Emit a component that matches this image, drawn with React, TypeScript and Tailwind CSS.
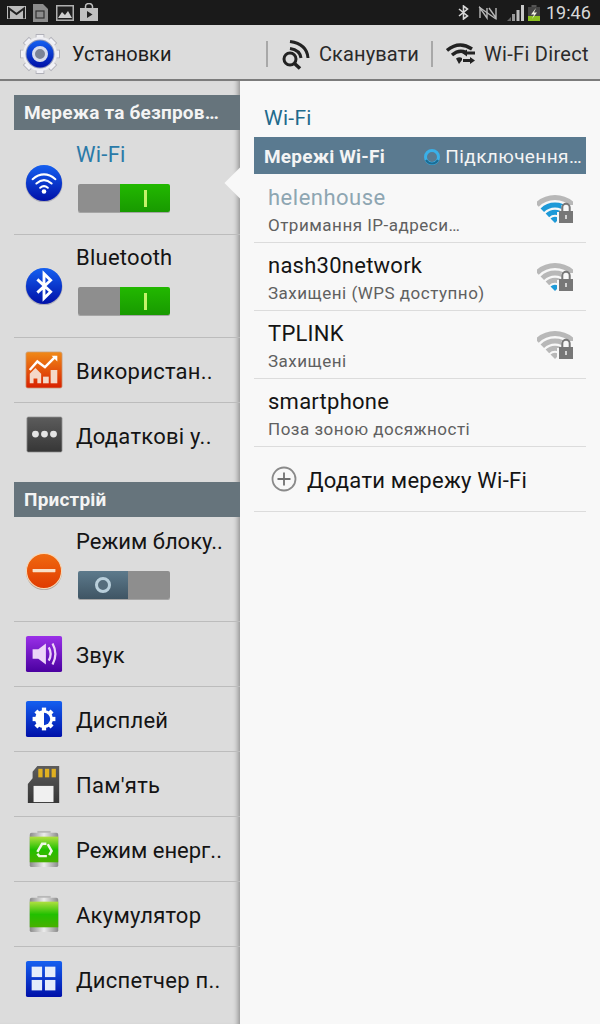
import React from "react";

const Toggle = ({ on }: { on: boolean }) =>
  on ? (
    <div className="flex h-[28px] w-[92px] overflow-hidden rounded-[2px] shadow-[0_1px_0_rgba(0,0,0,0.25)]">
      <div className="w-[42px] bg-[#8e8e8e]" />
      <div className="flex w-[50px] items-center justify-center bg-linear-to-b from-[#22b800] to-[#189a00]">
        <div className="h-[17px] w-[3px] bg-[#c4f26a]" />
      </div>
    </div>
  ) : (
    <div className="flex h-[28px] w-[92px] overflow-hidden rounded-[2px] shadow-[0_1px_0_rgba(0,0,0,0.25)]">
      <div className="flex w-[50px] items-center justify-center bg-linear-to-b from-[#5d7a8c] to-[#3f5564]">
        <div className="h-[16px] w-[16px] rounded-full border-[3px] border-[#b9cfdb] bg-[#566d7c]" />
      </div>
      <div className="w-[42px] bg-[#8e8e8e]" />
    </div>
  );

const Defs = () => (
  <svg width="0" height="0" className="absolute">
    <defs>
      <linearGradient id="blue" x1="0" y1="0" x2="0" y2="1">
        <stop offset="0" stopColor="#1560f0" />
        <stop offset="1" stopColor="#0010a8" />
      </linearGradient>
      <linearGradient id="orange" x1="0" y1="0" x2="0" y2="1">
        <stop offset="0" stopColor="#f08a18" />
        <stop offset="1" stopColor="#d82000" />
      </linearGradient>
      <linearGradient id="red" x1="0" y1="0" x2="0" y2="1">
        <stop offset="0" stopColor="#f06a10" />
        <stop offset="1" stopColor="#e03a00" />
      </linearGradient>
      <linearGradient id="purple" x1="0" y1="0" x2="0" y2="1">
        <stop offset="0" stopColor="#9a30e8" />
        <stop offset="1" stopColor="#4a00a0" />
      </linearGradient>
      <linearGradient id="dark" x1="0" y1="0" x2="0" y2="1">
        <stop offset="0" stopColor="#5c5c5c" />
        <stop offset="1" stopColor="#363636" />
      </linearGradient>
      <linearGradient id="green" x1="0" y1="0" x2="0" y2="1">
        <stop offset="0" stopColor="#b0e040" />
        <stop offset="0.5" stopColor="#22c000" />
        <stop offset="1" stopColor="#48b000" />
      </linearGradient>
      <linearGradient id="metal" x1="0" y1="0" x2="1" y2="0">
        <stop offset="0" stopColor="#8a8a8a" />
        <stop offset="0.5" stopColor="#ececec" />
        <stop offset="1" stopColor="#8a8a8a" />
      </linearGradient>
    </defs>
  </svg>
);

const I = ({ children }: { children: React.ReactNode }) => (
  <svg width="38" height="38" viewBox="0 0 40 40" className="block">
    {children}
  </svg>
);

const WifiRound = () => (
  <I>
    <circle cx="20" cy="21" r="19.5" fill="#7a7a90" opacity=".45" />
    <circle cx="20" cy="20" r="19" fill="url(#blue)" />
    <g fill="none" stroke="#fff" strokeWidth="2.2" strokeLinecap="round">
      <path d="M8 16 Q20 6 32 16" />
      <path d="M12 20.5 Q20 13.5 28 20.5" />
      <path d="M16 25 Q20 21.5 24 25" />
    </g>
    <circle cx="20" cy="29" r="2.4" fill="#fff" />
  </I>
);
const BtRound = () => (
  <I>
    <circle cx="20" cy="21" r="19.5" fill="#7a7a90" opacity=".45" />
    <circle cx="20" cy="20" r="19" fill="url(#blue)" />
    <path d="M13 13 L27 26 L20 33 L20 7 L27 14 L13 27" fill="none" stroke="#fff" strokeWidth="3" strokeLinejoin="miter" />
  </I>
);
const Usage = () => (
  <I>
    <rect x="1" y="1" width="38" height="38" rx="2" fill="url(#orange)" stroke="#c9a080" strokeWidth=".8" />
    <path d="M5 20 L13 11 L21 17 L32 6" fill="none" stroke="#fff" strokeWidth="2.6" />
    <path d="M28 5 H34 V11 Z" fill="#fff" />
    <path d="M5 34 V24 L11 18 L17 24 V34 H13 V29 H9 V34 Z" fill="#f4d8c8" />
    <rect x="19" y="27" width="6" height="7" fill="#f4d8c8" />
    <rect x="27" y="20" width="7" height="14" fill="#f4d8c8" />
  </I>
);
const More = () => (
  <I>
    <rect x="2" y="1" width="37" height="37" rx="1.5" fill="url(#dark)" stroke="#9a9a9a" strokeWidth=".8" />
    <circle cx="11" cy="19" r="3.6" fill="#e4e4e4" />
    <circle cx="20.5" cy="19" r="3.6" fill="#e4e4e4" />
    <circle cx="30" cy="19" r="3.6" fill="#e4e4e4" />
  </I>
);
const Block = () => (
  <I>
    <circle cx="20" cy="21" r="19" fill="#7a6a60" opacity=".5" />
    <circle cx="20" cy="20" r="18.5" fill="url(#red)" stroke="#f6d8b8" strokeWidth="1.2" />
    <rect x="8" y="18" width="24" height="3.4" rx=".5" fill="#f8e0c8" />
  </I>
);
const Sound = () => (
  <I>
    <rect x="1" y="1" width="38" height="38" rx="2" fill="url(#purple)" />
    <path d="M8 15 H14 L22 9 V31 L14 25 H8 Z" fill="#ecd4f8" />
    <path d="M25 13 Q29 20 25 27" fill="none" stroke="#ecd4f8" strokeWidth="2.4" />
    <path d="M29 9 Q35 20 29 31" fill="none" stroke="#ecd4f8" strokeWidth="2.4" />
  </I>
);
const Display = () => (
  <I>
    <rect x="1" y="1" width="38" height="38" rx="2" fill="url(#blue)" />
    <g stroke="#fff" strokeWidth="4.5">
      <path d="M20 8 V32" />
      <path d="M8 20 H32" />
      <path d="M11.5 11.5 L28.5 28.5" />
      <path d="M28.5 11.5 L11.5 28.5" />
    </g>
    <circle cx="20" cy="20" r="9.5" fill="#fff" />
    <path d="M20 13.5 A6.5 6.5 0 0 1 20 26.5 Z" fill="#0a3ad0" />
  </I>
);
const Memory = () => (
  <I>
    <path d="M13 1 H36 V40 H3 V20 L8 14 V7 Z" fill="url(#dark)" />
    <g fill="#e0b020">
      <rect x="14" y="4" width="4.5" height="9" />
      <rect x="21" y="4" width="4.5" height="9" />
      <rect x="28" y="4" width="4.5" height="9" />
    </g>
    <rect x="9" y="22" width="21" height="17" fill="#f0f0f0" />
  </I>
);
const Batt = ({ recycle }: { recycle?: boolean }) => (
  <I>
    <rect x="13" y="1" width="14" height="4" fill="#b8b8b8" />
    <rect x="5" y="3" width="30" height="36" rx="2" fill="url(#metal)" />
    <rect x="5" y="7" width="30" height="27" fill="url(#green)" />
    {recycle && (
      <g fill="none" stroke="#f0f8e8" strokeWidth="2.6">
        <path d="M13 23 L18 14.5 H22.5" />
        <path d="M24 15 L28 22 L25.5 26.5" />
        <path d="M23 27.5 H15 L13 25" />
      </g>
    )}
  </I>
);
const Manager = () => (
  <I>
    <rect x="1" y="1" width="38" height="38" rx="2" fill="url(#blue)" />
    <g fill="#e4ecfa">
      <rect x="7" y="7" width="11" height="11" />
      <rect x="21" y="7" width="11" height="11" />
      <rect x="7" y="21" width="11" height="11" />
      <rect x="21" y="21" width="11" height="11" />
    </g>
  </I>
);

const SectionHeader = ({ text }: { text: string }) => (
  <div className="flex h-[35px] items-center bg-[#66747c] pt-[2px] pl-[10px] text-[19px] font-bold tracking-[0.2px] text-[#f4f4f4]">{text}</div>
);

const Sep = () => <div className="h-px bg-[#bcbcbc]" />;

const TallRow = ({
  icon,
  title,
  on,
  active,
  heightClass,
  iconClass,
  textClass,
  trackClass = "tracking-[0.25px]",
}: {
  icon: React.ReactNode;
  title: string;
  on: boolean;
  active?: boolean;
  heightClass: string;
  iconClass: string;
  textClass: string;
  trackClass?: string;
}) => (
  <div className={`flex items-start ${heightClass}`}>
    <div className={`ml-[11px] w-[38px] shrink-0 ${iconClass}`}>{icon}</div>
    <div className={`ml-[13px] flex flex-col ${textClass}`}>
      <div className={`h-[28px] text-[22px] leading-[28px] whitespace-nowrap ${trackClass} ${active ? "text-[#2a7aa8]" : "text-[#141414]"}`}>{title}</div>
      <div className="mt-[15px] ml-[2px]">
        <Toggle on={on} />
      </div>
    </div>
  </div>
);

const Row = ({ icon, title, trackClass = "tracking-[0.25px]" }: { icon: React.ReactNode; title: string; trackClass?: string }) => (
  <div className="flex h-[64px] items-center">
    <div className="ml-[11px] w-[38px] shrink-0">{icon}</div>
    <div className={`ml-[13px] pt-[3px] text-[22px] whitespace-nowrap text-[#141414] ${trackClass}`}>{title}</div>
  </div>
);

const WifiSignal = ({ level }: { level: number }) => {
  const c = (n: number) => (level >= n ? "#1e9ad8" : "#b8b8b8");
  return (
    <svg width="36" height="28" viewBox="0 0 36 28" className="block">
      <g fill="none" strokeWidth="5">
        <path d="M0 10 A25.5 25.5 0 0 1 36 10" stroke={c(4)} />
        <path d="M5.3 15.3 A18 18 0 0 1 30.7 15.3" stroke={c(3)} />
        <path d="M10.4 20.4 A10.8 10.8 0 0 1 25.6 20.4" stroke={c(2)} />
      </g>
      <path d="M18 28 L13.5 23.5 A6.4 6.4 0 0 1 22.5 23.5 Z" fill={c(1)} />
      <path d="M24.5 10 H36 V28 H20 V17 H24.5 Z" fill="#f8f8f8" />
      <rect x="22" y="16" width="14" height="12" fill="#777" />
      <path d="M25.3 16 V12.5 A3.7 3.7 0 0 1 32.7 12.5 V16" fill="none" stroke="#777" strokeWidth="2" />
      <rect x="28.1" y="20" width="1.8" height="4" fill="#ddd" />
    </svg>
  );
};

const Network = ({ name, sub, level, faded }: { name: string; sub: string; level?: number; faded?: boolean }) => (
  <div className="flex h-[68px] items-start justify-between border-b border-[#dcdcdc]">
    <div className="pl-[14px]">
      <div className={`mt-[9px] h-[28px] text-[22px] leading-[28px] ${faded ? "tracking-[0.5px] text-[#8ea6b2]" : "tracking-[0.25px] text-[#141414]"}`}>{name}</div>
      <div className="mt-[2px] text-[17px] leading-[22px] tracking-[0.5px] text-[#606060]">{sub}</div>
    </div>
    {level !== undefined && (
      <div className="mt-[20px] mr-[13px]">
        <WifiSignal level={level} />
      </div>
    )}
  </div>
);

export default function App() {
  return (
    <div className="flex h-[1024px] w-[600px] flex-col overflow-hidden bg-[#f8f8f8] font-['Roboto',sans-serif]">
      <Defs />
      {/* status bar */}
      <div className="flex h-[25px] shrink-0 items-center bg-[#1a1a1a] pl-[7px]">
        <svg width="19" height="13" viewBox="0 0 19 13" className="mr-[7px]">
          <rect width="19" height="13" fill="#bcbcbc" />
          <path d="M2 12.5 V2.5 L9.5 8 L17 2.5 V12.5" fill="none" stroke="#222" strokeWidth="2" />
        </svg>
        <svg width="15" height="18" viewBox="0 0 15 18" className="mr-[8px]">
          <path d="M0 0 H10 L15 5 V18 H0 Z" fill="#8c8c8c" />
          <rect x="3" y="7" width="8" height="7" fill="none" stroke="#333" strokeWidth="1.2" />
        </svg>
        <svg width="18" height="16" viewBox="0 0 18 16" className="mr-[6px]">
          <rect x=".75" y=".75" width="16.5" height="14.5" fill="#222" stroke="#b0b0b0" strokeWidth="1.5" />
          <path d="M2 13 L6 7 L9 10 L12 6 L16 13 Z" fill="#d0d0d0" />
        </svg>
        <svg width="18" height="18" viewBox="0 0 18 18" className="mb-[2px]">
          <rect y="5" width="18" height="13" fill="#c0c0c0" />
          <path d="M5.5 5 V3.5 A3.5 3 0 0 1 12.5 3.5 V5" fill="none" stroke="#c0c0c0" strokeWidth="1.5" />
          <path d="M7 8 L12.5 11.5 L7 15 Z" fill="#222" />
        </svg>
        <div className="flex-1" />
        <svg width="11" height="15" viewBox="0 0 11 15" className="mr-[9px]">
          <path d="M1 4 L9.5 11 L5.5 14 V1 L9.5 4 L1 11" fill="none" stroke="#d8d8d8" strokeWidth="1.6" />
        </svg>
        <svg width="20" height="14" viewBox="0 0 20 14" className="mr-[9px]">
          <g fill="none" stroke="#b8b8b8" strokeWidth="1.4">
            <path d="M2 12 V2 L9 12 V2" />
            <path d="M11 2 L18 12 V2" />
            <path d="M1 1 L18 13" />
          </g>
        </svg>
        <svg width="18" height="16" viewBox="0 0 18 16" className="mr-[3px]">
          <path d="M0 16 L4 12 V16 Z" fill="#666" />
          <rect x="5" y="9" width="3" height="7" fill="#999" />
          <rect x="9.5" y="5" width="3" height="11" fill="#bbb" />
          <rect x="14" y="0" width="3" height="16" fill="#c8c8c8" />
        </svg>
        <svg width="12" height="16" viewBox="0 0 12 16" className="mr-[6px]">
          <rect x="3.5" y="0" width="5" height="2" fill="#555" />
          <rect y="2" width="12" height="14" fill="#444" />
          <rect y="11" width="12" height="5" fill="#8cc020" />
          <path d="M8 3 L3 9.5 H6 L4 14 L9 7.5 H6 Z" fill="#f0f0e0" />
        </svg>
        <div className="w-[54px] text-[18px] text-[#d8d8d8]">19:46</div>
      </div>

      {/* action bar */}
      <div className="flex h-[56px] shrink-0 items-center border-b-2 border-[#7c7c7c] bg-[#dcdcdc] pt-[3px] text-[20px] text-[#2a2a2a]">
        <div className="ml-[20px]">
          <svg width="40" height="40" viewBox="0 0 40 40" className="block">
            <g stroke="#b0b0b8" strokeWidth="8.6">
              <path d="M20 0 V40" />
              <path d="M0 20 H40" />
              <path d="M5.9 5.9 L34.1 34.1" />
              <path d="M34.1 5.9 L5.9 34.1" />
            </g>
            <g stroke="#f2f2f6" strokeWidth="7">
              <path d="M20 1 V39" />
              <path d="M1 20 H39" />
              <path d="M6.5 6.5 L33.5 33.5" />
              <path d="M33.5 6.5 L6.5 33.5" />
            </g>
            <circle cx="20" cy="20" r="17" fill="#eeeef2" />
            <circle cx="20" cy="20" r="14.5" fill="#8e96b8" />
            <circle cx="20" cy="20" r="13.5" fill="url(#blue)" />
            <circle cx="20" cy="20" r="6.5" fill="#7c8496" stroke="#d8dcec" strokeWidth="3" />
          </svg>
        </div>
        <div className="ml-[12px] w-[194px] text-[#1e1e1e]">Установки</div>
        <div className="h-[26px] w-[2px] bg-[#a8a8a8]" />
        <div className="ml-[12px]">
          <svg width="30" height="32" viewBox="0 0 30 32" className="block">
            <g fill="none" stroke="#222" strokeWidth="3">
              <path d="M10 3.5 Q27 6 28 20" />
              <path d="M10 10.5 Q20 12 21 20" />
            </g>
            <circle cx="10" cy="21" r="6" fill="none" stroke="#222" strokeWidth="3" />
            <path d="M14.5 25.5 L20 30.5" stroke="#222" strokeWidth="3.6" />
          </svg>
        </div>
        <div className="ml-[9px] w-[112px] tracking-[0.1px]">Сканувати</div>
        <div className="h-[26px] w-[2px] bg-[#a8a8a8]" />
        <div className="ml-[13px]">
          <svg width="30" height="22" viewBox="0 0 30 22" className="block">
            <g fill="none" stroke="#222" strokeWidth="3.4">
              <path d="M1 7.5 Q13 -2.5 26 6" />
              <path d="M6 12 Q13 6 20 9.5" />
            </g>
            <path d="M10 15.5 Q13.5 13.5 16 15 V17 L13 21 Z" fill="#222" />
            <path d="M16 10 L21 6.5 V8.5 H29 V11.5 H21 V13.5 Z" fill="#222" />
            <path d="M29 17.5 L24 14 V16 H17 V19 H24 V21 Z" fill="#222" />
          </svg>
        </div>
        <div className="ml-[8px] tracking-[0.3px]">Wi-Fi Direct</div>
      </div>

      {/* body */}
      <div className="flex min-h-0 flex-1">
        <div className="relative w-[240px] shrink-0 bg-[#dcdcdc] pt-[14px] pl-[14px] shadow-[inset_-6px_0_5px_-4px_rgba(0,0,0,0.35)]">
          <SectionHeader text="Мережа та безпров…" />
          <TallRow icon={<WifiRound />} title="Wi-Fi" on active heightClass="h-[104px]" iconClass="mt-[34px]" textClass="pt-[11px]" />
          <Sep />
          <TallRow icon={<BtRound />} title="Bluetooth" on heightClass="h-[102px]" iconClass="mt-[32px]" textClass="pt-[9px]" />
          <Sep />
          <Row icon={<Usage />} title="Використан.." />
          <Sep />
          <Row icon={<More />} title="Додаткові у.." />
          <div className="h-[15px]" />
          <SectionHeader text="Пристрій" />
          <TallRow icon={<Block />} title="Режим блоку.." on={false} heightClass="h-[104px]" iconClass="mt-[35px]" textClass="pt-[11px]" trackClass="tracking-[0px]" />
          <Sep />
          <Row icon={<Sound />} title="Звук" />
          <Sep />
          <Row icon={<Display />} title="Дисплей" />
          <Sep />
          <Row icon={<Memory />} title="Пам'ять" />
          <Sep />
          <Row icon={<Batt recycle />} title="Режим енерг.." trackClass="tracking-[0px]" />
          <Sep />
          <Row icon={<Batt />} title="Акумулятор" />
          <Sep />
          <Row icon={<Manager />} title="Диспетчер п.." />
          {/* pointer notch */}
          <div className="absolute top-[91px] left-[229px] h-[22px] w-[22px] rotate-45 bg-[#f8f8f8]" />
        </div>

        <div className="relative min-w-0 flex-1 pr-[14px] pl-[14px]">
          <div className="flex h-[56px] items-end pb-[4px] pl-[10px] text-[21px] leading-[30px] tracking-[0.3px] text-[#1f6a8c]">Wi-Fi</div>
          <div className="mb-px flex h-[37px] items-center justify-between bg-[#5a7a90] pt-[3px] pr-[4px] pl-[10px] text-[19px] text-[#f4f4f4]">
            <span className="font-bold tracking-[0.2px]">Мережі Wi-Fi</span>
            <span className="flex items-center tracking-[0.4px]">
              <svg width="18" height="18" viewBox="0 0 18 18" className="mr-[4px]">
                <circle cx="9" cy="9" r="6.5" fill="none" stroke="#3ab0e8" strokeWidth="3" />
                <path d="M3 12 A7 7 0 0 0 15 12" fill="none" stroke="#1a6c94" strokeWidth="2" />
              </svg>
              Підключення…
            </span>
          </div>
          <Network name="helenhouse" sub="Отримання IP-адреси…" level={3} faded />
          <Network name="nash30network" sub="Захищені (WPS доступно)" level={1} />
          <Network name="TPLINK" sub="Захищені" level={0} />
          <Network name="smartphone" sub="Поза зоною досяжності" />
          <div className="flex h-[65px] items-center border-b border-[#dcdcdc] pl-[17px] text-[22px] tracking-[0.25px] text-[#141414]">
            <svg width="26" height="26" viewBox="0 0 26 26" className="mr-[10px]">
              <circle cx="13" cy="13" r="11.5" fill="none" stroke="#8a8a8a" strokeWidth="1.8" />
              <path d="M6.5 13 H19.5 M13 6.5 V19.5" stroke="#707070" strokeWidth="1.8" />
            </svg>
            <span className="pt-[3px]">Додати мережу Wi-Fi</span>
          </div>
        </div>
      </div>
    </div>
  );
}
